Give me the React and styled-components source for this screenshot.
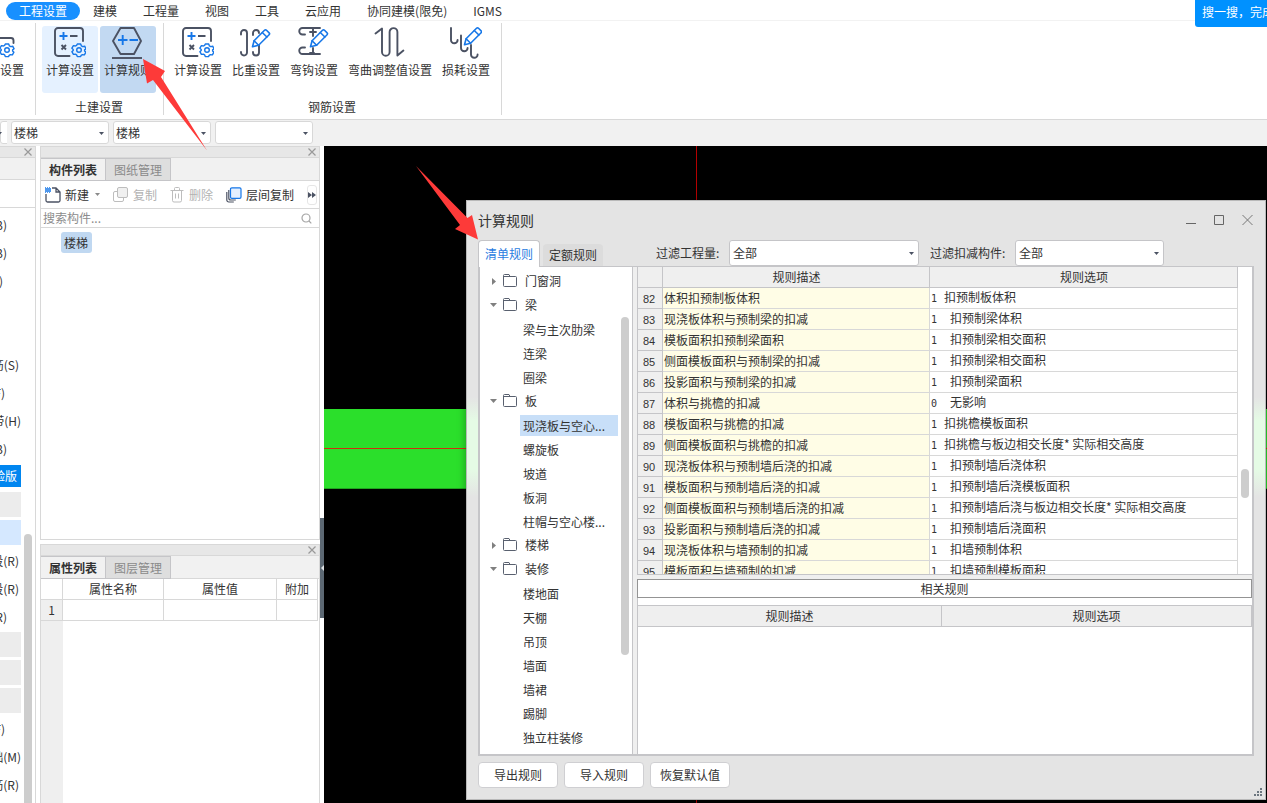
import styled, { createGlobalStyle, ThemeProvider } from "styled-components";

const theme = {
  text: "#333333",
  muted: "#8a8a8a",
  disabled: "#b2b2b2",
  line: "#d8d8d8",
  frame: "#c5c5c8",
  bar: "#f1f1f1",
  strip: "#e7e7e7",
  blue: "#1890ff",
  ink: "#4b5263",
  thumb: "#cdcdcd",
};

const GlobalStyle = createGlobalStyle`
  *, *::before, *::after { box-sizing: border-box; }
  body {
    margin: 0;
    overflow: hidden;
  }
  body, button, select, input, table {
    font-family: "Noto Sans CJK SC", "Noto Sans", sans-serif;
    font-size: 12px;
    line-height: 18px;
    color: ${theme.text};
  }
  button, select, input {
    margin: 0;
    padding: 0;
    border: 0;
    background: none;
    border-radius: 0;
    outline: 0;
  }
  button { white-space: nowrap; }
  svg { display: block; flex: none; }
`;

const Shell = styled.div`
  position: relative;
  display: flex;
  flex-direction: column;
  height: 100vh;
  overflow: hidden;
  background: #fff;
`;

/* menu + ribbon */

const MenuBar = styled.nav`
  display: flex;
  align-items: center;
  height: 21px;
  padding: 2px 6px 0;
  border-bottom: 1px solid #f2f2f2;
`;

const MenuItem = styled.button`
  height: 18px;
  padding: 0 13px;
  border-radius: 9px;
  background: ${({ $active, theme }) => ($active ? theme.blue : "transparent")};
  color: ${({ $active, theme }) => ($active ? "#fff" : theme.text)};
`;

const SearchFlag = styled.button`
  position: absolute;
  top: 0;
  right: 0;
  width: 72px;
  height: 27px;
  padding: 0 0 4px 7px;
  overflow: hidden;
  text-align: left;
  background: #0091ff;
  color: #fff;
  border-bottom-left-radius: 3px;
`;

const Ribbon = styled.section`
  display: flex;
  height: 99px;
  padding: 2px 0 4px;
  border-bottom: 1px solid ${({ theme }) => theme.line};
`;

const RibbonGroup = styled.div`
  display: flex;
  flex-direction: column;
  align-items: ${({ $clipped }) => ($clipped ? "flex-end" : "center")};
  width: ${({ $clipped }) => ($clipped ? "36px" : "auto")};
  padding: 3px 7px 0 6px;
  overflow: hidden;
  border-right: 1px solid ${({ theme }) => theme.line};
`;

const RibbonTools = styled.div`
  display: flex;
  gap: 2px;
`;

const RibbonButton = styled.button`
  display: flex;
  flex-direction: column;
  align-items: center;
  height: 67px;
  padding: 0 4px;
  border-radius: 3px;
  background: ${({ $tone }) =>
    $tone === "active" ? "#c2d9f2" : $tone === "hover" ? "#e5f1ff" : "transparent"};

  span {
    line-height: 20px;
  }
`;

const GroupLabel = styled.div`
  margin-top: 5px;
`;

/* drop-downs */

const ComboBar = styled.div`
  display: flex;
  gap: 4px;
  height: 26px;
  padding-top: 1px;
  background: ${({ theme }) => theme.bar};
`;

const ComboBox = styled.div`
  position: relative;
  width: ${({ $width }) => $width}px;
  height: ${({ $height }) => $height || 23}px;
  flex: none;
  overflow: hidden;

  select {
    display: block;
    width: 100%;
    height: 100%;
    padding: 0 16px 0 2px;
    appearance: none;
    background: #fff;
    border: 1px solid ${({ theme }) => theme.line};
    border-radius: 3px;
  }
  svg {
    position: absolute;
    top: 50%;
    right: 5px;
    margin-top: -1px;
    pointer-events: none;
  }
`;

/* docked panels */

const Main = styled.main`
  display: flex;
  flex: 1;
  min-height: 0;
`;

const NavPane = styled.aside`
  display: flex;
  flex-direction: column;
  flex: none;
  width: 36px;
  margin-right: 4px;
  border-right: 1px solid ${({ theme }) => theme.line};
`;

const DockTitle = styled.div`
  display: flex;
  align-items: center;
  justify-content: flex-end;
  flex: none;
  height: 12px;
  padding-right: 3px;
  background: ${({ theme }) => theme.strip};
  border-top: 1px solid ${({ theme }) => theme.line};
  border-bottom: 1px solid ${({ theme }) => theme.line};
`;

const NavStrip = styled.div`
  flex: none;
  height: ${({ $height }) => $height}px;
  background: ${({ $fill }) => $fill};
  border-bottom: 1px solid ${({ theme }) => theme.line};
`;

const NavBody = styled.div`
  display: flex;
  justify-content: space-between;
  flex: 1;
  min-height: 0;
  padding: 3px 3px 0 0;
  overflow: hidden;
`;

const NavList = styled.ul`
  display: flex;
  flex-direction: column;
  width: 21px;
  margin: 0;
  padding: 0;
  list-style: none;
`;

const navFill = { group: "#ececec", picked: "#d5e8ff", badge: "#0086f0" };

const NavItem = styled.li`
  display: flex;
  align-items: center;
  justify-content: flex-end;
  flex: none;
  height: ${({ $kind }) => ($kind === "badge" ? 22 : 25)}px;
  margin: ${({ $kind }) => ($kind === "badge" ? "2px 0 4px" : "1px 0 2px")};
  padding-right: ${({ $end }) => $end || 0}px;
  overflow: hidden;
  white-space: nowrap;
  background: ${({ $kind }) => navFill[$kind] || "transparent"};
  color: ${({ $kind, theme }) => ($kind === "badge" ? "#fff" : theme.text)};
`;

const Thumb = styled.div`
  flex: none;
  width: 8px;
  height: ${({ $height }) => $height};
  margin-top: ${({ $top }) => $top}px;
  border-radius: 4px;
  background: ${({ theme }) => theme.thumb};
`;

const Dock = styled.div`
  display: flex;
  flex-direction: column;
  gap: 4px;
  flex: none;
  width: 280px;
`;

const Panel = styled.section`
  display: flex;
  flex-direction: column;
  flex: ${({ $flex }) => $flex};
  min-height: 0;
  border: solid ${({ theme }) => theme.line};
  border-width: 0 1px ${({ $open }) => ($open ? 0 : 1)}px 1px;
`;

const DockTabs = styled.div`
  display: flex;
  flex: none;
  height: 23px;
  background: ${({ theme }) => theme.bar};
  border-bottom: 1px solid ${({ theme }) => theme.line};
`;

const DockTab = styled.button`
  width: ${({ $active }) => ($active ? 64 : 66)}px;
  height: 23px;
  border: 1px solid ${({ theme }) => theme.frame};
  border-left-width: ${({ $active }) => ($active ? 0 : 1)}px;
  border-right-width: ${({ $active }) => ($active ? 0 : 1)}px;
  background: ${({ $active, theme }) => ($active ? theme.bar : "#dedede")};
  color: ${({ $active, theme }) => ($active ? theme.text : theme.muted)};
  font-weight: ${({ $active }) => ($active ? 700 : 400)};
`;

const Toolbar = styled.div`
  display: flex;
  align-items: center;
  gap: 13px;
  flex: none;
  height: 28px;
  padding: 0 2px 0 4px;
  border-bottom: 1px solid ${({ theme }) => theme.line};
`;

const ToolButton = styled.button`
  display: flex;
  align-items: center;
  gap: 4px;
  color: ${({ theme }) => theme.text};

  &:disabled {
    color: ${({ theme }) => theme.disabled};
  }
  svg:nth-child(2) {
    margin-left: 2px;
  }
`;

const MoreButton = styled.button`
  display: grid;
  place-items: center;
  width: 11px;
  height: 20px;
  margin-left: auto;
  border: 1px solid #e6e6e6;
  border-radius: 3px;
`;

const SearchRow = styled.label`
  display: flex;
  align-items: center;
  flex: none;
  height: 19px;
  padding: 0 7px 0 2px;
  border-bottom: 1px solid ${({ theme }) => theme.line};

  input {
    flex: 1;
    min-width: 0;
    height: 18px;
  }
  input::placeholder {
    color: #8c8c8c;
    opacity: 1;
  }
`;

const ComponentList = styled.div`
  flex: 1;
  padding: 4px 20px;
`;

const ComponentChip = styled.button`
  height: 21px;
  padding: 0 4px 0 3px;
  border-radius: 3px;
  background: #c0d8f1;
`;

const PropBody = styled.div`
  display: flex;
  flex-direction: column;
  flex: 1;
  min-height: 0;
  padding-right: 1px;

  &::after {
    content: "";
    flex: 1;
    width: 22px;
    background: #efefef;
  }
`;

const PropTable = styled.table`
  width: 100%;
  table-layout: fixed;
  border-collapse: separate;
  border-spacing: 0;

  th, td {
    height: 21px;
    padding: 0;
    font-weight: 400;
    border: solid ${({ theme }) => theme.line};
    border-width: 0 1px 1px 0;
    text-align: center;
  }
  tbody th {
    background: #efefef;
  }
`;

const Splitter = styled.div`
  flex: none;
  width: 4px;
  padding-top: 372px;

  button {
    display: grid;
    place-items: center end;
    width: 4px;
    height: 100px;
    background: #5c6873;
  }
`;

/* drawing area */

const Canvas = styled.section`
  position: relative;
  flex: 1;
  min-width: 0;
  overflow: hidden;
  background: #000;
`;

const Slab = styled.div`
  position: absolute;
  top: 263px;
  left: 0;
  right: 0;
  height: 80px;
  background: #2bdf2b;
  border-bottom: 1px solid #1fa51f;
`;

const AxisX = styled.div`
  position: absolute;
  top: 302px;
  left: 0;
  right: 0;
  height: 1px;
  background: #d03010;
`;

const AxisY = styled.div`
  position: absolute;
  top: 0;
  bottom: 0;
  left: 372px;
  width: 1px;
  background: #b40000;
`;

/* rules dialog */

const Dialog = styled.section`
  position: absolute;
  top: 54px;
  right: 1px;
  bottom: 3px;
  left: 142px;
  display: flex;
  flex-direction: column;
  padding: 0 11px;
  border: 1px solid #b9b9b9;
  background: #e4e4e4 linear-gradient(#e4e4e4 196px, #e5fbe5 220px, #e5fbe5 268px, #e4e4e4 296px);
  box-shadow: 0 0 8px rgba(0, 0, 0, 0.35);
`;

const DialogHead = styled.header`
  display: flex;
  align-items: center;
  gap: 18px;
  flex: none;
  height: 39px;
  padding-bottom: 2px;

  h1 {
    margin: 0 auto 0 0;
    font-size: 14px;
    line-height: 20px;
    font-weight: 400;
  }
  button:last-child {
    margin-right: 1px;
  }
`;

const FilterRow = styled.div`
  display: flex;
  align-items: center;
  flex: none;
  height: 26px;
`;

const RuleTab = styled.button`
  position: relative;
  z-index: 1;
  align-self: flex-end;
  width: ${({ $active }) => ($active ? 62 : 60)}px;
  height: ${({ $active }) => ($active ? 27 : 22)}px;
  margin-right: 3px;
  margin-bottom: ${({ $active }) => ($active ? -1 : 0)}px;
  border: ${({ $active, theme }) => ($active ? `1px solid ${theme.frame}` : "0")};
  border-bottom: 0;
  border-radius: 4px 4px 0 0;
  background: ${({ $active }) => ($active ? "#fff" : "#dcdcdc")};
  color: ${({ $active, theme }) => ($active ? "#2a7de1" : theme.text)};
`;

const Filter = styled.div`
  display: flex;
  align-items: center;
  gap: 10px;
  margin-left: ${({ $gap }) => $gap}px;

  label {
    width: ${({ $label }) => $label}px;
    white-space: nowrap;
  }
  select {
    padding-left: 3px;
    border-color: ${({ theme }) => theme.frame};
  }
`;

const Content = styled.div`
  display: flex;
  flex: 1;
  min-height: 0;
  border: 2px solid ${({ theme }) => theme.frame};
  border-top-width: 1px;
  background: #efefef;
`;

const TreePane = styled.div`
  display: flex;
  flex: none;
  width: 153px;
  margin-right: 4px;
  padding-right: 3px;
  background: #fff;
  border-right: 1px solid ${({ theme }) => theme.frame};
`;

const Tree = styled.ul`
  display: flex;
  flex-direction: column;
  flex: 1;
  min-width: 0;
  margin: 0;
  padding: 2px 3px 0 0;
  list-style: none;
`;

const TreeParent = styled.li`
  display: flex;
  align-items: center;
  gap: 6px;
  flex: none;
  height: 24px;
  padding-left: 9px;
`;

const TreeChild = styled.li`
  display: flex;
  align-items: center;
  flex: none;
  height: 21px;
  margin: 2px 0 1px 40px;
  padding-left: 3px;
  white-space: nowrap;
  background: ${({ $selected }) => ($selected ? "#c8dff8" : "transparent")};
`;

const RulePane = styled.div`
  display: flex;
  flex-direction: column;
  flex: 1;
  min-width: 0;
`;

const RuleScroll = styled.div`
  display: flex;
  flex: 0 0 308px;
  overflow: hidden;
  padding-right: 3px;
  background: #fff;
  border-bottom: 1px solid ${({ theme }) => theme.frame};
`;

const RuleTable = styled.table`
  flex: 1;
  min-width: 0;
  width: 100%;
  margin-right: 3px;
  align-self: flex-start;
  table-layout: fixed;
  border-collapse: separate;
  border-spacing: 0;
  border-left: 1px solid ${({ theme }) => theme.frame};

  th, td {
    height: 21px;
    padding: 0 0 0 1px;
    font-weight: 400;
    text-align: left;
    white-space: nowrap;
    overflow: hidden;
    border: solid ${({ theme }) => theme.line};
    border-width: 0 1px 1px 0;
  }
  thead th {
    text-align: center;
    background: #efefef;
    border-color: ${({ theme }) => theme.frame};
  }
  tbody th {
    padding: 2px 2px 0 0;
    font-family: "Liberation Sans", sans-serif;
    font-size: 11px;
    line-height: 16px;
    text-align: center;
    background: #efefef;
    border-color: ${({ theme }) => theme.frame};
  }
  td:nth-child(2) {
    background: #fffde6;
  }
`;

const Code = styled.span`
  display: inline-block;
  width: ${({ $indent }) => ($indent ? 19 : 13)}px;
  font-family: "DejaVu Sans Mono", monospace;
  font-size: 10px;
`;

const RelatedTitle = styled.h2`
  flex: none;
  height: 19px;
  margin: 4px 0 0;
  font-size: 12px;
  line-height: 17px;
  font-weight: 400;
  text-align: center;
  background: #fff;
  border: 1px solid #949494;
`;

const RelatedBody = styled.div`
  flex: 1;
  padding-top: 7px;
  background: #fff;
  border-left: 1px solid ${({ theme }) => theme.frame};
`;

const RelatedTable = styled.table`
  width: 100%;
  table-layout: fixed;
  border-collapse: separate;
  border-spacing: 0;

  th {
    height: 22px;
    padding: 0;
    font-weight: 400;
    background: #efefef;
    border: solid ${({ theme }) => theme.frame};
    border-width: 1px 1px 1px 0;
  }
`;

const DialogFoot = styled.footer`
  display: flex;
  gap: 6px;
  flex: none;
  height: 43px;
  padding-top: 6px;
`;

const ActionButton = styled.button`
  width: 80px;
  height: 26px;
  border: 1px solid #cfcfd2;
  border-radius: 4px;
  background: #fff;
`;

const Grip = styled.svg`
  position: absolute;
  right: 3px;
  bottom: 3px;
`;

const Pointer = styled.svg`
  position: absolute;
  top: ${({ $top }) => $top}px;
  left: ${({ $left }) => $left}px;
  pointer-events: none;
  fill: #fd3a39;
`;

/* icons */

const BLUE = "#1677e8";

const Caret = ({ color = "#4b5263" }) => (
  <svg width="5" height="3" viewBox="0 0 5 3">
    <path d="M0 0h5L2.5 3z" fill={color} />
  </svg>
);

const Cross = () => (
  <svg width="8" height="8" viewBox="0 0 8 8" stroke="#999" strokeWidth="1.2">
    <path d="M.5.5l7 7M7.5.5l-7 7" />
  </svg>
);

const RibbonIcon = ({ children }) => (
  <svg
    width="32"
    height="34"
    viewBox="0 0 32 34"
    fill="none"
    stroke={theme.ink}
    strokeWidth="1.9"
    strokeLinecap="round"
    strokeLinejoin="round"
  >
    {children}
  </svg>
);

const Gear = ({ x, y }) => (
  <g transform={`translate(${x} ${y})`} stroke={BLUE} strokeWidth="1.4">
    <path d="M-1.7-6h3.4l.7 1.9 1.3.7 2-.4 1.4 2.6L5.6-.1v1l1.3 1.3-1.5 2.7-2-.3-1.2.7-.7 1.3h-3.2l-.7-1.8-1.2-.7-2 .3-1.500-2.700 1.300-1.300v-1l-1.300-1.200 1.500-2.600 2 .4 1.200-.7z" />
    <circle r="2.3" />
  </g>
);

const Pencil = ({ x = 0, y = 0 }) => (
  <g transform={`translate(${x} ${y})`} stroke={BLUE} strokeWidth="1.6">
    <path d="M12.5 20.7l1.6-6L24.5 4.3q1-1 2 0l2.6 2.5q1 1 0 2L18.6 19.2z" fill="#fff" />
    <path d="M14.1 14.7l4.5 4.5M22.3 6.5l4.6 4.5" />
  </g>
);

const CalcIcon = () => (
  <RibbonIcon>
    <path d="M15.5 30H4a3 3 0 0 1-3-3V5a3 3 0 0 1 3-3h22a3 3 0 0 1 3 3v10" />
    <path d="M16 10h7.5M7.5 19l4.5 4.5M12 19l-4.500 4.500" strokeLinecap="butt" />
    <path d="M9.5 6v8M5.5 10h8" stroke={BLUE} strokeLinecap="butt" />
    <Gear x={25} y={24} />
  </RibbonIcon>
);

const ProjectIcon = () => (
  <RibbonIcon>
    <path d="M12 30H6a3 3 0 0 1-3-3V12h24a2.5 2.5 0 0 1 2.5 2.5V17" />
    <Gear x={23} y={24} />
  </RibbonIcon>
);

const RuleIcon = () => (
  <RibbonIcon>
    <path d="M8.500 2h13.500L29 15l-7 13H8.500L1 15z" />
    <path d="M0 32h30" strokeLinecap="butt" />
    <path d="M10.7 9v10M6 14h9.5M17.5 14H26" stroke={BLUE} strokeLinecap="butt" />
  </RibbonIcon>
);

const WeightIcon = () => (
  <RibbonIcon>
    <path d="M1 8.5V7a3 3 0 0 1 6 0v19.500a3 3 0 0 1-6 0V26M13 9V7a3 3 0 0 1 6 0M19 18v8.500a3 3 0 0 1-6 0V26" />
    <Pencil />
  </RibbonIcon>
);

const HookIcon = () => (
  <RibbonIcon>
    <path d="M22 2H4.500a3.200 3.200 0 0 0 0 6.500H7M22 28H4.500a3.200 3.200 0 0 1 0-6.500H7M12 6h6M15 2v8M12 27h4M15 22v6" />
    <Pencil />
  </RibbonIcon>
);

const BendIcon = () => (
  <RibbonIcon>
    <path d="M1.5 7.5L8 2.5V26a3.800 3.800 0 0 0 7.600 0V6a3.900 3.900 0 0 1 7.800 0v23.500l6-5" />
  </RibbonIcon>
);

const LossIcon = () => (
  <RibbonIcon>
    <path d="M1 2v12a3.300 3.300 0 0 0 6.600 0M11 9.500V22a3.300 3.300 0 0 0 6.600 0M21 19v9.500a3.300 3.300 0 0 0 6.600 0" />
    <Pencil x={2} y={-2} />
  </RibbonIcon>
);

const NewIcon = () => (
  <svg width="16" height="16" viewBox="0 0 16 16" fill="none" stroke={theme.ink} strokeWidth="1.3">
    <path d="M1 7v6.500a1.500 1.500 0 0 0 1.500 1.500h11a1.500 1.500 0 0 0 1.500-1.500V5l-4-4H7M11 1v4h4" />
    <path d="M0 1h5M0 3h5M0 5h5" stroke={BLUE} strokeDasharray="1 1" />
    <path d="M1 2h5M1 4h5" stroke={BLUE} strokeDasharray="1 1" />
  </svg>
);

const CopyIcon = () => (
  <svg width="16" height="16" viewBox="0 0 16 16" fill="none" stroke="#bdbdbd">
    <rect x=".5" y="4.5" width="10" height="10" rx="1.5" />
    <rect x="4.5" y=".5" width="10" height="10" rx="1.5" fill="#f0f0f0" />
  </svg>
);

const TrashIcon = () => (
  <svg width="15" height="16" viewBox="0 0 15 16" fill="none" stroke="#bdbdbd">
    <path d="M.5 3.500h13M4.500 3V1.500a1 1 0 0 1 1-1h3a1 1 0 0 1 1 1V3M2.500 4v9.500a1.500 1.500 0 0 0 1.500 1.500h6a1.500 1.500 0 0 0 1.500-1.500V4M5.500 6.500v5M8.500 6.500v5" />
  </svg>
);

const LayerIcon = () => (
  <svg width="16" height="16" viewBox="0 0 16 16" fill="none" stroke={theme.ink} strokeWidth="1.2">
    <path d="M.8 5v8a2 2 0 0 0 2 2h5M2.800 3v8a2 2 0 0 0 2 2h5" />
    <rect x="4.5" y=".8" width="10.500" height="10.500" rx="1.3" fill="#e3efff" stroke={BLUE} />
  </svg>
);

const SearchIcon = () => (
  <svg width="11" height="11" viewBox="0 0 11 11" fill="none" stroke="#a5a5a5" strokeWidth="1.2">
    <circle cx="5" cy="5" r="4" />
    <path d="M8 8l2.300 2.300" />
  </svg>
);

const FolderIcon = () => (
  <svg width="16" height="14" viewBox="0 0 16 14" fill="none" stroke="#59606f">
    <path d="M.5 11.500v-10a1 1 0 0 1 1-1h4.500l1 2h5.500a1 1 0 0 1 1 1v8a1 1 0 0 1-1 1h-11a1 1 0 0 1-1-1zM.5 2.500h6.500" />
  </svg>
);

const Twisty = ({ open }) => (
  <svg width="8" height="8" viewBox="0 0 8 8" fill="#808080">
    <path d={open ? "M1 2h7L4.500 6z" : "M3 1v7l4-3.500z"} />
  </svg>
);

/* data */

const menus = ["工程设置", "建模", "工程量", "视图", "工具", "云应用", "协同建模(限免)", "IGMS"];

const civilTools = [
  { label: "计算设置", Icon: CalcIcon, tone: "hover" },
  { label: "计算规则", Icon: RuleIcon, tone: "active" },
];

const rebarTools = [
  { label: "计算设置", Icon: CalcIcon },
  { label: "比重设置", Icon: WeightIcon },
  { label: "弯钩设置", Icon: HookIcon },
  { label: "弯曲调整值设置", Icon: BendIcon },
  { label: "损耗设置", Icon: LossIcon },
];

const navItems = [
  { text: "B)", end: 14 },
  { text: "B)", end: 14 },
  { text: ")", end: 18 },
  {},
  {},
  { text: "筋(S)", end: 2 },
  { text: "F)", end: 16 },
  { text: "带(H)" },
  { text: "B)", end: 14 },
  { text: "验版", end: 4, kind: "badge" },
  { kind: "group" },
  { kind: "picked" },
  { text: "段(R)", end: 2 },
  { text: "段(R)", end: 2 },
  { text: "R)", end: 14 },
  { kind: "group" },
  { kind: "group" },
  { kind: "group" },
  { text: "F)", end: 16 },
  { text: "础(M)" },
  { text: "筋(R)", end: 2 },
];

const tree = [
  { name: "门窗洞" },
  { name: "梁", children: ["梁与主次肋梁", "连梁", "圈梁"] },
  { name: "板", children: ["现浇板与空心...", "螺旋板", "坡道", "板洞", "柱帽与空心楼..."] },
  { name: "楼梯" },
  {
    name: "装修",
    children: ["楼地面", "天棚", "吊顶", "墙面", "墙裙", "踢脚", "独立柱装修"],
  },
];

// [description, option code, option text, indented]
const rules = [
  ["体积扣预制板体积", 1, "扣预制板体积", false],
  ["现浇板体积与预制梁的扣减", 1, "扣预制梁体积", true],
  ["模板面积扣预制梁面积", 1, "扣预制梁相交面积", true],
  ["侧面模板面积与预制梁的扣减", 1, "扣预制梁相交面积", true],
  ["投影面积与预制梁的扣减", 1, "扣预制梁面积", true],
  ["体积与挑檐的扣减", 0, "无影响", true],
  ["模板面积与挑檐的扣减", 1, "扣挑檐模板面积", false],
  ["侧面模板面积与挑檐的扣减", 1, "扣挑檐与板边相交长度* 实际相交高度", false],
  ["现浇板体积与预制墙后浇的扣减", 1, "扣预制墙后浇体积", true],
  ["模板面积与预制墙后浇的扣减", 1, "扣预制墙后浇模板面积", true],
  ["侧面模板面积与预制墙后浇的扣减", 1, "扣预制墙后浇与板边相交长度* 实际相交高度", true],
  ["投影面积与预制墙后浇的扣减", 1, "扣预制墙后浇面积", true],
  ["现浇板体积与墙预制的扣减", 1, "扣墙预制体积", true],
  ["模板面积与墙预制的扣减", 1, "扣墙预制模板面积", true],
];

function Combo({ id, width, height, value, label }) {
  return (
    <ComboBox $width={width} $height={height}>
      <select id={id} aria-label={label} defaultValue={value}>
        <option value={value}>{value}</option>
      </select>
      <Caret />
    </ComboBox>
  );
}

function Tools({ items }) {
  return (
    <RibbonTools>
      {items.map(({ label, Icon, tone }) => (
        <RibbonButton key={label} type="button" $tone={tone}>
          <Icon />
          <span>{label}</span>
        </RibbonButton>
      ))}
    </RibbonTools>
  );
}

function ComponentPanel() {
  return (
    <Panel $flex="0 0 60%">
      <DockTitle>
        <Cross />
      </DockTitle>
      <DockTabs>
        <DockTab type="button" $active>构件列表</DockTab>
        <DockTab type="button">图纸管理</DockTab>
      </DockTabs>
      <Toolbar>
        <ToolButton type="button">
          <NewIcon /> 新建 <Caret color="#8a8a8a" />
        </ToolButton>
        <ToolButton type="button" disabled>
          <CopyIcon /> 复制
        </ToolButton>
        <ToolButton type="button" disabled>
          <TrashIcon /> 删除
        </ToolButton>
        <ToolButton type="button">
          <LayerIcon /> 层间复制
        </ToolButton>
        <MoreButton type="button" aria-label="更多">
          <svg width="8" height="6" viewBox="0 0 8 6" fill={theme.ink}>
            <path d="M0 0v6l4-3zM4 0v6l4-3z" />
          </svg>
        </MoreButton>
      </Toolbar>
      <SearchRow>
        <input type="text" placeholder="搜索构件..." aria-label="搜索构件" />
        <SearchIcon />
      </SearchRow>
      <ComponentList>
        <ComponentChip type="button">楼梯</ComponentChip>
      </ComponentList>
    </Panel>
  );
}

function PropertyPanel() {
  return (
    <Panel $flex="1" $open>
      <DockTitle>
        <Cross />
      </DockTitle>
      <DockTabs>
        <DockTab type="button" $active>属性列表</DockTab>
        <DockTab type="button">图层管理</DockTab>
      </DockTabs>
      <PropBody>
        <PropTable>
          <colgroup>
            <col width="22" />
            <col width="101" />
            <col width="113" />
            <col />
          </colgroup>
          <thead>
            <tr>
              <th />
              <th>属性名称</th>
              <th>属性值</th>
              <th>附加</th>
            </tr>
          </thead>
          <tbody>
            <tr>
              <th>1</th>
              <td />
              <td />
              <td />
            </tr>
          </tbody>
        </PropTable>
      </PropBody>
    </Panel>
  );
}

function RulesDialog() {
  return (
    <Dialog role="dialog" aria-label="计算规则">
      <DialogHead>
        <h1>计算规则</h1>
        <button type="button" aria-label="最小化">
          <svg width="10" height="12" stroke="#666"><path d="M0 9.500h10" /></svg>
        </button>
        <button type="button" aria-label="最大化">
          <svg width="10" height="12" stroke="#666" fill="none"><path d="M.5 1.500h9v9h-9z" /></svg>
        </button>
        <button type="button" aria-label="关闭">
          <svg width="11" height="12" stroke="#777"><path d="M.5 1l10 10M10.500 1l-10 10" /></svg>
        </button>
      </DialogHead>

      <FilterRow>
        <RuleTab type="button" $active>清单规则</RuleTab>
        <RuleTab type="button">定额规则</RuleTab>
        <Filter $gap={50} $label={63}>
          <label htmlFor="quantity">过滤工程量:</label>
          <Combo id="quantity" width={190} height={26} value="全部" />
        </Filter>
        <Filter $gap={11} $label={75}>
          <label htmlFor="deduct">过滤扣减构件:</label>
          <Combo id="deduct" width={149} height={26} value="全部" />
        </Filter>
      </FilterRow>

      <Content>
        <TreePane>
          <Tree>
            {tree.map(({ name, children = [] }) => [
              <TreeParent key={name}>
                <Twisty open={children.length > 0} />
                <FolderIcon />
                {name}
              </TreeParent>,
              ...children.map((child) => (
                <TreeChild key={child} $selected={child === "现浇板与空心..."}>
                  {child}
                </TreeChild>
              )),
            ])}
          </Tree>
          <Thumb $top={50} $height="338px" />
        </TreePane>

        <RulePane>
          <RuleScroll>
            <RuleTable>
              <colgroup>
                <col width="25" />
                <col width="267" />
                <col />
              </colgroup>
              <thead>
                <tr>
                  <th />
                  <th>规则描述</th>
                  <th>规则选项</th>
                </tr>
              </thead>
              <tbody>
                {rules.map(([desc, code, option, indent], i) => (
                  <tr key={desc}>
                    <th>{82 + i}</th>
                    <td>{desc}</td>
                    <td>
                      <Code $indent={indent}>{code}</Code>
                      {option}
                    </td>
                  </tr>
                ))}
              </tbody>
            </RuleTable>
            <Thumb $top={202} $height="29px" />
          </RuleScroll>
          <RelatedTitle>相关规则</RelatedTitle>
          <RelatedBody>
            <RelatedTable>
              <colgroup>
                <col width="304" />
                <col />
              </colgroup>
              <thead>
                <tr>
                  <th>规则描述</th>
                  <th>规则选项</th>
                </tr>
              </thead>
            </RelatedTable>
          </RelatedBody>
        </RulePane>
      </Content>

      <DialogFoot>
        <ActionButton type="button">导出规则</ActionButton>
        <ActionButton type="button">导入规则</ActionButton>
        <ActionButton type="button">恢复默认值</ActionButton>
      </DialogFoot>
      <Grip width="8" height="8" fill="#6d7780">
        <path d="M6 0h2v2H6zM3 3h2v2H3zM6 3h2v2H6zM0 6h2v2H0zM3 6h2v2H3zM6 6h2v2H6z" />
      </Grip>
    </Dialog>
  );
}

export default function App() {
  return (
    <ThemeProvider theme={theme}>
      <GlobalStyle />
      <Shell>
        <MenuBar>
          {menus.map((name, i) => (
            <MenuItem key={name} type="button" $active={i === 0}>
              {name}
            </MenuItem>
          ))}
        </MenuBar>
        <SearchFlag type="button">搜一搜，完成</SearchFlag>

        <Ribbon>
          <RibbonGroup $clipped>
            <Tools items={[{ label: "工程设置", Icon: ProjectIcon }]} />
          </RibbonGroup>
          <RibbonGroup>
            <Tools items={civilTools} />
            <GroupLabel>土建设置</GroupLabel>
          </RibbonGroup>
          <RibbonGroup>
            <Tools items={rebarTools} />
            <GroupLabel>钢筋设置</GroupLabel>
          </RibbonGroup>
        </Ribbon>

        <ComboBar>
          <Combo width={7} value="" label="楼层" />
          <Combo width={98} value="楼梯" label="构件类别" />
          <Combo width={98} value="楼梯" label="构件类型" />
          <Combo width={98} value="" label="构件名称" />
        </ComboBar>

        <Main>
          <NavPane>
            <DockTitle>
              <Cross />
            </DockTitle>
            <NavStrip $height={22} $fill={theme.bar} />
            <NavStrip $height={28} $fill="#fff" />
            <NavBody>
              <NavList>
                {navItems.map(({ text, end, kind }, i) => (
                  <NavItem key={i} $end={end} $kind={kind}>
                    {text}
                  </NavItem>
                ))}
              </NavList>
              <Thumb $top={323} $height="100%" />
            </NavBody>
          </NavPane>

          <Dock>
            <ComponentPanel />
            <PropertyPanel />
          </Dock>

          <Splitter>
            <button type="button" aria-label="收起">
              <svg width="3" height="6" fill="#dfe3e6"><path d="M3 0v6L0 3z" /></svg>
            </button>
          </Splitter>

          <Canvas>
            <Slab />
            <AxisX />
            <AxisY />
            <RulesDialog />
          </Canvas>
        </Main>

        <Pointer $top={59} $left={143} width="65" height="92">
          <path d="M0 0l22 12-4 6 46 73.500L10 21l-6 3.500z" />
        </Pointer>
        <Pointer $top={166} $left={416} width="63" height="75">
          <path d="M0 0l51.500 52 4.500-3L62 73.500 39 63l5-4z" />
        </Pointer>
      </Shell>
    </ThemeProvider>
  );
}
